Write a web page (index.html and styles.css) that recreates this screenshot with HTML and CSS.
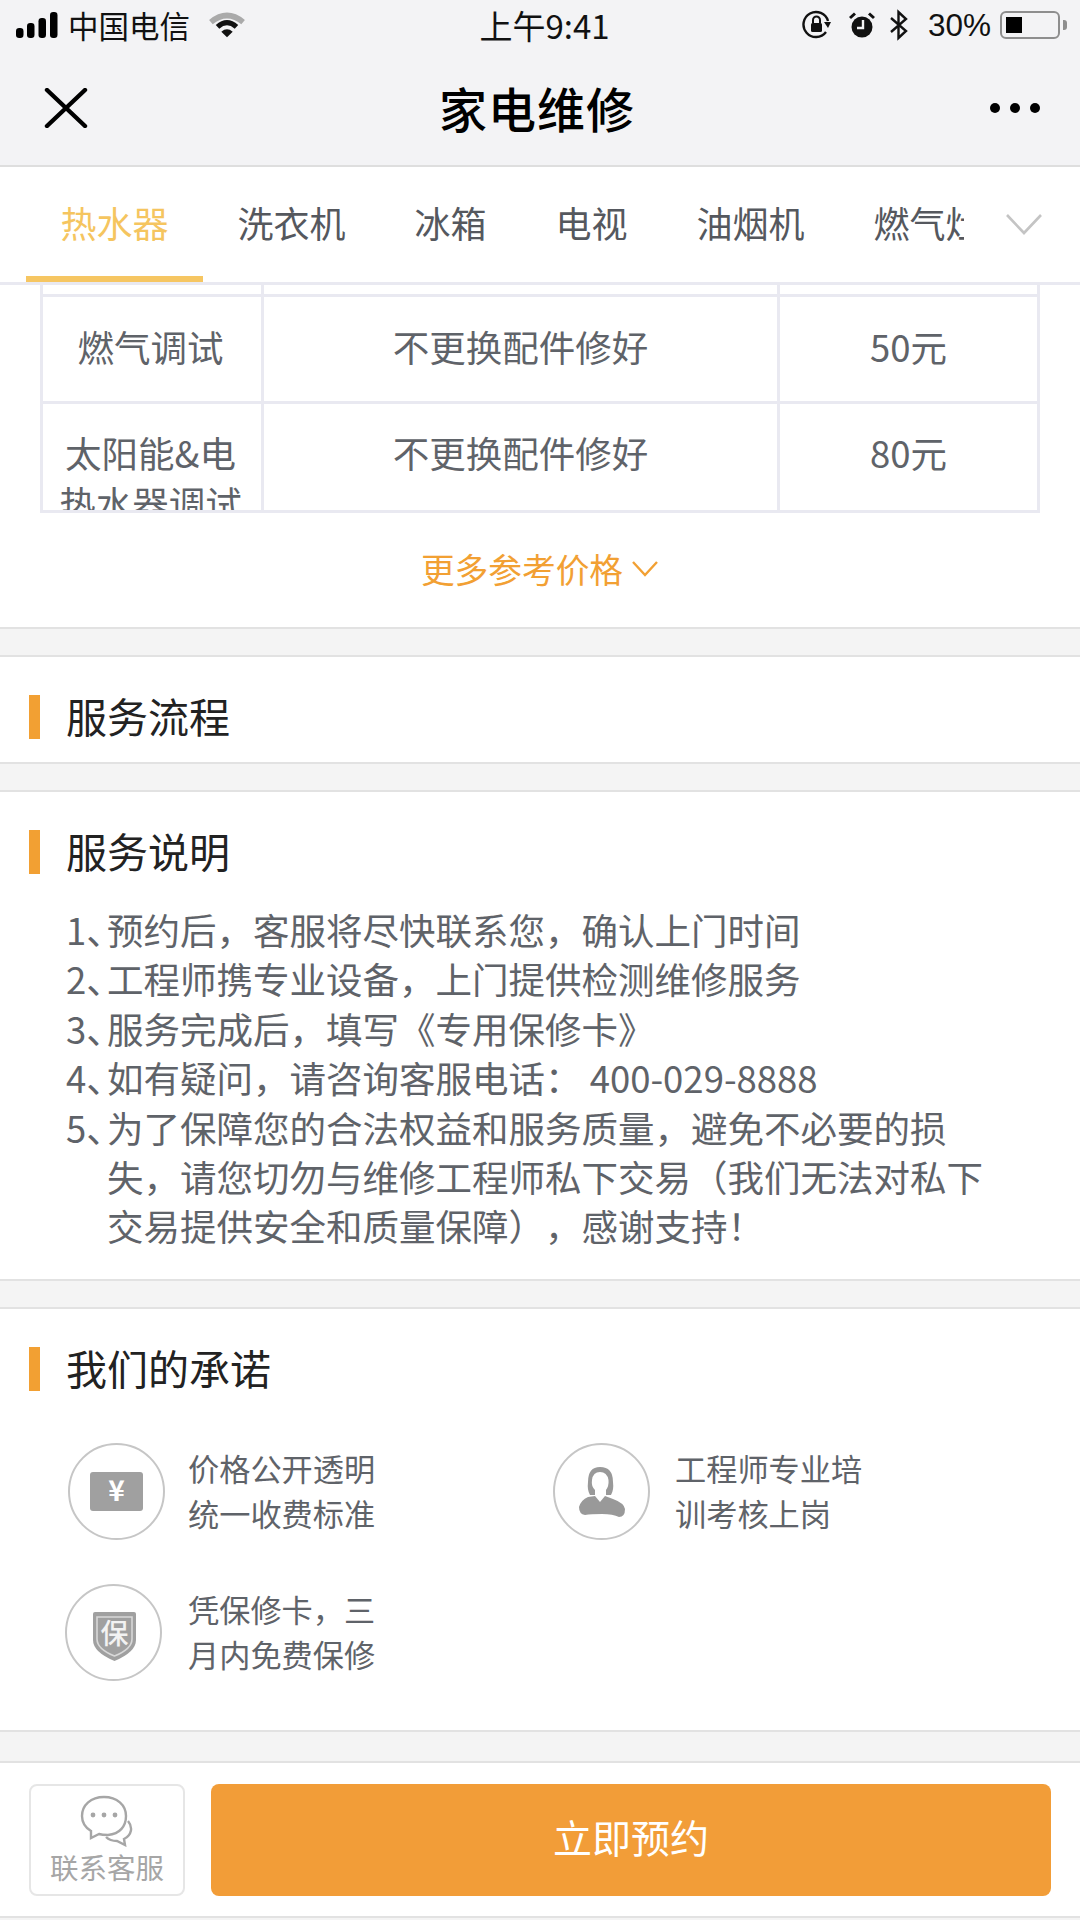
FILE: index.html
```html
<!DOCTYPE html>
<html lang="zh-CN">
<head>
    <meta charset="UTF-8">
    <meta name="viewport" content="width=device-width, initial-scale=1.0">
    <title>家电维修</title>
    <link rel="stylesheet" href="styles.css">
</head>
<body>
    <div class="top-bar">
        <div class="status-bar">
            <div class="status-left">
                <svg width="42" height="26" viewBox="0 0 42 26">
                    <rect x="0" y="16" width="7.5" height="10" rx="3.2"/>
                    <rect x="11" y="11" width="7.5" height="15" rx="3.2"/>
                    <rect x="22.5" y="6" width="7.5" height="20" rx="3.2"/>
                    <rect x="34" y="0" width="7.5" height="26" rx="3.2"/>
                </svg>
                <span class="carrier">中国电信</span>
                <svg class="wifi" width="36" height="28" viewBox="0 0 38 28">
                    <path d="M2 11 Q19 -3 36 11" fill="none" stroke="#aaa" stroke-width="6"/>
                    <path d="M9 16 Q19 7 29 16" fill="none" stroke="#111" stroke-width="5.5"/>
                    <path d="M13 21 L19 27 L25 21 Q19 16 13 21Z" fill="#111"/>
                </svg>
            </div>
            <div class="status-time">上午9:41</div>
            <div class="status-right">
                <svg width="30" height="30" viewBox="0 0 30 30">
                    <path d="M24 22 A12.5 12.5 0 1 1 26 11" fill="none" stroke="#111" stroke-width="2.4"/>
                    <path d="M22 12 L29 12 L26 18Z" fill="#111"/>
                    <rect x="9" y="13" width="11" height="9" rx="1.5" fill="#111"/>
                    <path d="M11 13 V10 A3.5 3.5 0 0 1 18 10 V13" fill="none" stroke="#111" stroke-width="2"/>
                </svg>
                <svg class="alarm" width="26" height="26" viewBox="0 0 26 26">
                    <circle cx="13" cy="15" r="10.5" fill="#111"/>
                    <path d="M1 6 L6 1.5 M25 6 L20 1.5" stroke="#111" stroke-width="3" fill="none"/>
                    <path d="M14 8 V16 H8" stroke="#f3f3f5" stroke-width="2.4" fill="none"/>
                </svg>
                <svg class="bluetooth" width="20" height="32" viewBox="0 0 20 30">
                    <path d="M2 8 L17 21 L9.5 28 V2 L17 9 L2 22" fill="none" stroke="#111" stroke-width="2.4"/>
                </svg>
                <span class="battery-pct">30%</span>
                <div class="battery"><div class="battery-fill"></div></div>
                <div class="battery-tip"></div>
            </div>
        </div>
        <div class="nav-bar">
            <svg class="nav-close" width="44" height="40" viewBox="0 0 44 40">
                <path d="M3 2 L41 38 M41 2 L3 38" stroke="#000" stroke-width="4.4" stroke-linecap="round"/>
            </svg>
            <h1 class="nav-title">家电维修</h1>
            <div class="nav-more"><i></i><i></i><i></i></div>
        </div>
    </div>

    <div class="tabs">
        <div class="tab-list">
            <div class="tab active">热水器</div>
            <div class="tab">洗衣机</div>
            <div class="tab">冰箱</div>
            <div class="tab">电视</div>
            <div class="tab">油烟机</div>
            <div class="tab">燃气灶</div>
        </div>
        <svg class="tab-arrow" width="38" height="22" viewBox="0 0 38 22">
            <path d="M2 2 L19 20 L36 2" fill="none" stroke="#c4c4c4" stroke-width="2.6"/>
        </svg>
    </div>

    <section class="price-section">
        <div class="price-scroll">
            <table class="price-table">
                <colgroup>
                    <col class="col-name">
                    <col class="col-desc">
                    <col class="col-price">
                </colgroup>
                <tr class="row-stub"><td></td><td></td><td></td></tr>
                <tr>
                    <td>燃气调试</td>
                    <td>不更换配件修好</td>
                    <td>50元</td>
                </tr>
                <tr class="row-top">
                    <td>太阳能&amp;电热水器调试</td>
                    <td>不更换配件修好</td>
                    <td>80元</td>
                </tr>
            </table>
        </div>
        <div class="more-prices">
            更多参考价格
            <svg width="28" height="17" viewBox="0 0 28 17">
                <path d="M2 2 L14 15 L26 2" fill="none" stroke="#f2a033" stroke-width="2.4"/>
            </svg>
        </div>
    </section>

    <section class="card card-flow">
        <h2 class="card-title">服务流程</h2>
    </section>

    <section class="card card-notes">
        <h2 class="card-title">服务说明</h2>
        <div class="notes">
            <div class="note"><span class="note-num">1<span class="note-mark">、</span></span><p>预约后，客服将尽快联系您，确认上门时间</p></div>
            <div class="note"><span class="note-num">2<span class="note-mark">、</span></span><p>工程师携专业设备，上门提供检测维修服务</p></div>
            <div class="note"><span class="note-num">3<span class="note-mark">、</span></span><p>服务完成后，填写《专用保修卡》</p></div>
            <div class="note"><span class="note-num">4<span class="note-mark">、</span></span><p>如有疑问，请咨询客服电话： 400-029-8888</p></div>
            <div class="note"><span class="note-num">5<span class="note-mark">、</span></span><p>为了保障您的合法权益和服务质量，避免不必要的损失，请您切勿与维修工程师私下交易（我们无法对私下交易提供安全和质量保障），感谢支持！</p></div>
        </div>
    </section>

    <section class="card card-promise">
        <h2 class="card-title">我们的承诺</h2>
        <div class="promises">
            <div class="promise">
                <div class="promise-icon">
                    <svg width="97" height="97" viewBox="0 0 97 97">
                        <circle cx="48.5" cy="48.5" r="47.5" fill="none" stroke="#c6c6c6" stroke-width="2"/>
                        <rect x="22" y="29" width="53" height="39" rx="3" fill="#a0a0a0"/>
                        <text x="48.5" y="58" text-anchor="middle" class="icon-text yen">¥</text>
                    </svg>
                </div>
                <p>价格公开透明统一收费标准</p>
            </div>
            <div class="promise">
                <div class="promise-icon icon-person">
                    <svg width="97" height="97" viewBox="0 0 97 97">
                        <circle cx="48.5" cy="48.5" r="47.5" fill="none" stroke="#c6c6c6" stroke-width="2"/>
                        <path d="M37 52 Q34 47 35 39 Q35 24 47 24 Q60 24 60 39 Q61 47 58 52 L53 52 L53 47 Q56 43 55.5 37 Q54 29 47 29 Q40 29 39 37 Q38 43 42 47 L42 52Z" fill="#999"/>
                        <path d="M26 64 Q28 57 35 54 L42 53 L47 59 L52 53 L60 56 Q71 60 72 66 Q72 74 66 74 Q60 71 49 71 Q38 71 32 72 Q26 71 26 64Z" fill="#999"/>
                    </svg>
                </div>
                <p>工程师专业培训考核上岗</p>
            </div>
            <div class="promise">
                <div class="promise-icon icon-shield">
                    <svg width="97" height="97" viewBox="0 0 97 97">
                        <circle cx="48.5" cy="48.5" r="47.5" fill="none" stroke="#c6c6c6" stroke-width="2"/>
                        <path d="M28 30 Q28 28 30 28 H69 Q71 28 71 30 V56 Q71 68 49.5 77 Q28 68 28 56Z" fill="#a0a0a0"/>
                        <path d="M32 33 H67 V55 Q67 65 49.5 72 Q32 65 32 55Z" fill="none" stroke="#d8d8d8" stroke-width="1.6"/>
                        <text x="49.5" y="60" text-anchor="middle" class="icon-text bao">保</text>
                    </svg>
                </div>
                <p>凭保修卡，三月内免费保修</p>
            </div>
        </div>
    </section>

    <div class="bottom-bar">
        <div class="contact">
            <svg width="54" height="52" viewBox="0 0 54 52">
                <path d="M24 2 C11 2 2 10 2 21 C2 28 6 33 11 36 L11 43 L19 39 C22 40 25 40 28 40 C40 39 46 31 46 21 C46 10 37 2 24 2Z" fill="none" stroke="#a6a6a6" stroke-width="2.4"/>
                <path d="M48 26 C53 32 52 40 44 44 L45 50 L37 46 C33 46 29 45 26 42" fill="none" stroke="#a6a6a6" stroke-width="2.4"/>
                <circle cx="13" cy="20" r="2.4" fill="#a6a6a6"/>
                <circle cx="24" cy="20" r="2.4" fill="#a6a6a6"/>
                <circle cx="35" cy="20" r="2.4" fill="#a6a6a6"/>
            </svg>
            <span>联系客服</span>
        </div>
        <button class="book-btn">立即预约</button>
    </div>
</body>
</html>
```

FILE: styles.css
```css
* {
    box-sizing: border-box;
}
html, body {
    margin: 0;
    padding: 0;
}
body {
    width: 1080px;
    height: 1920px;
    overflow: hidden;
    background-color: #f4f4f4;
    font-family: "Noto Sans CJK SC", "Liberation Sans", sans-serif;
    color: #5f6369;
    text-spacing-trim: space-all;
    font-feature-settings: "chws" 0, "palt" 0;
}
h1, h2, p {
    margin: 0;
    font-weight: 400;
}

/* top */
.top-bar {
    height: 167px;
    background-color: #f3f3f5;
    border-bottom: 2px solid #dedede;
}
.status-bar {
    height: 50px;
    padding: 0 13px 0 16px;
    display: grid;
    grid-template-columns: 1fr auto 1fr;
    align-items: center;
    color: #111;
}
.status-left, .status-right {
    display: flex;
    align-items: center;
}
.status-right {
    justify-content: flex-end;
}
.carrier {
    margin-left: 10px;
    font-size: 30.5px;
    line-height: 40px;
}
.wifi {
    margin-left: 19px;
}
.status-time {
    padding-left: 6px;
    font-size: 33px;
    line-height: 40px;
}
.alarm {
    margin-left: 17px;
}
.bluetooth {
    margin-left: 14px;
}
.battery-pct {
    margin-left: 19px;
    font-family: "Liberation Sans", sans-serif;
    font-size: 31.5px;
    line-height: 40px;
}
.battery {
    width: 60px;
    height: 28px;
    margin-left: 9px;
    padding: 4px;
    border: 2px solid #8e8e8e;
    border-radius: 6px;
}
.battery-fill {
    width: 16px;
    height: 100%;
    background-color: #000;
}
.battery-tip {
    width: 4px;
    height: 10px;
    margin-left: 3px;
    background-color: #8e8e8e;
    border-radius: 0 3px 3px 0;
}
.nav-bar {
    height: 115px;
    padding: 0 40px 0 44px;
    display: flex;
    align-items: center;
    justify-content: space-between;
}
.nav-title {
    margin-left: -4px;
    padding-bottom: 2px;
    font-size: 48px;
    font-weight: 500;
    color: #000;
    letter-spacing: 1px;
}
.nav-more {
    display: flex;
    gap: 10px;
}
.nav-more i {
    width: 10px;
    height: 10px;
    border-radius: 50%;
    background-color: #000;
}

/* tabs */
.tabs {
    height: 118px;
    padding-left: 26px;
    display: flex;
    align-items: flex-start;
    background-color: #fff;
    border-bottom: 3px solid #e9e9f1;
}
.tab-list {
    width: 938px;
    height: 115px;
    display: flex;
    overflow: hidden;
}
.tab {
    flex-shrink: 0;
    height: 115px;
    padding: 0 34.5px;
    font-size: 36px;
    line-height: 110px;
    color: #55585e;
}
.tab.active {
    color: #f5c55f;
    border-bottom: 6px solid #f6c662;
}
.tab-arrow {
    margin: 46px 0 0 41px;
}

/* price table */
.price-section {
    height: 344px;
    background-color: #fff;
    border-bottom: 2px solid #e2e2e2;
}
.price-scroll {
    width: 1000px;
    height: 228px;
    margin-left: 40px;
    overflow: hidden;
    border-bottom: 3px solid #e9e9f1;
}
.price-table {
    width: 1000px;
    table-layout: fixed;
    border-collapse: collapse;
    font-size: 36.5px;
    line-height: 50px;
    text-align: center;
}
.price-table td {
    padding: 25px 10px 29px;
    border: 3px solid #e9e9f1;
}
.price-table td:first-child {
    padding-right: 13px;
}
.col-name {
    width: 221px;
}
.col-price {
    width: 260px;
}
.price-table .row-stub td {
    height: 10px;
    padding: 0;
    border-top: none;
}
.row-top td {
    vertical-align: top;
}
.price-table .row-top td {
    padding-top: 24px;
}
.more-prices {
    height: 113px;
    padding-bottom: 2px;
    display: flex;
    align-items: center;
    justify-content: center;
    gap: 8px;
    font-size: 33.7px;
    color: #f2a033;
}

/* cards */
.card {
    margin-top: 26px;
    background-color: #fff;
    border-top: 2px solid #e2e2e2;
    border-bottom: 2px solid #e2e2e2;
    padding-top: 38px;
}
.card-flow {
    height: 109px;
}
.card-notes {
    height: 491px;
}
.card-promise {
    height: 425px;
}
.card-title {
    height: 44px;
    padding-left: 26px;
    border-left: 11px solid #f2a033;
    margin-left: 29px;
    font-size: 41px;
    line-height: 40px;
    color: #222;
}
.notes {
    margin-top: 31px;
    padding-left: 66px;
    width: 1000px;
    font-size: 36.5px;
    line-height: 49.4px;
}
.note {
    display: flex;
}
.note-num {
    flex-shrink: 0;
    width: 41px;
    white-space: nowrap;
}
.note-mark {
    letter-spacing: -16px;
}

/* promises */
.promises {
    margin-top: 52px;
    padding-left: 68px;
    display: grid;
    grid-template-columns: 489px 489px;
    row-gap: 44px;
}
.promise {
    display: flex;
    align-items: center;
}
.promise-icon {
    flex-shrink: 0;
    width: 120px;
    height: 97px;
}
.icon-person {
    width: 122px;
    margin-left: -4px;
}
.icon-shield {
    margin-left: -3px;
    margin-right: 3px;
}
.promise p {
    width: 192px;
    padding-bottom: 3px;
    font-size: 31.2px;
    line-height: 45px;
}
.icon-text {
    fill: #fff;
    font-family: "Noto Sans CJK SC", sans-serif;
}
.yen {
    font-size: 28px;
    font-weight: 700;
}
.bao {
    font-size: 28px;
    font-weight: 500;
    fill: #f2f2f2;
}

/* bottom */
.bottom-bar {
    height: 157px;
    margin-top: 29px;
    padding: 21px 29px 0;
    display: flex;
    align-items: flex-start;
    gap: 26px;
    background-color: #fff;
    border-top: 2px solid #e2e2e2;
    border-bottom: 2px solid #e2e2e2;
}
.contact {
    width: 156px;
    height: 112px;
    padding-top: 9px;
    display: flex;
    flex-direction: column;
    align-items: center;
    border: 2px solid #e6e6e6;
    border-radius: 8px;
    font-size: 28.5px;
    line-height: 40px;
    color: #a6a6a6;
}
.book-btn {
    width: 840px;
    height: 112px;
    padding: 0 0 8px;
    border: none;
    border-radius: 8px;
    background-color: #f29d38;
    color: #fff;
    font-family: inherit;
    font-size: 39px;
}
```
